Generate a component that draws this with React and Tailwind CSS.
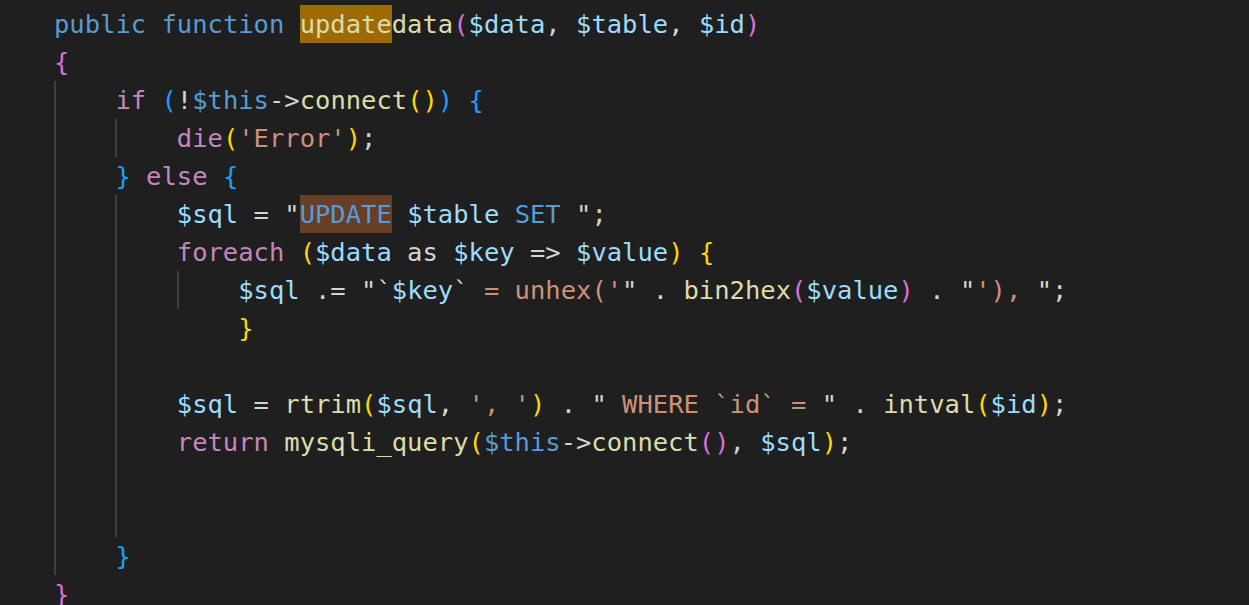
import React from 'react';

const colors = {
  kw: 'text-[#569cd6]',
  fn: 'text-[#dcdcaa]',
  v: 'text-[#9cdcfe]',
  ctl: 'text-[#c586c0]',
  s: 'text-[#ce9178]',
  p: 'text-[#d4d4d4]',
  b1: 'text-[#da70d6]',
  b2: 'text-[#ffd700]',
  b3: 'text-[#179fff]',
};

const highlights = {
  find: 'bg-[#9e6a03]',
  word: 'bg-[#673f27]',
};

// g = indent guides per indent level (1 = drawn), t = [text, colour, highlight]
const lines = [
  { g: [], t: [['public function ', 'kw'], ['update', 'fn', 'find'], ['data', 'fn'], ['(', 'b1'], ['$data', 'v'], [', ', 'p'], ['$table', 'v'], [', ', 'p'], ['$id', 'v'], [')', 'b1']] },
  { g: [], t: [['{', 'b1']] },
  { g: [1], t: [['if ', 'ctl'], ['(', 'b3'], ['!', 'p'], ['$this', 'kw'], ['->', 'p'], ['connect', 'fn'], ['()', 'b2'], [')', 'b3'], [' ', 'p'], ['{', 'b3']] },
  { g: [1, 1], t: [['die', 'ctl'], ['(', 'b2'], ["'Error'", 's'], [')', 'b2'], [';', 'p']] },
  { g: [1], t: [['}', 'b3'], [' else ', 'ctl'], ['{', 'b3']] },
  { g: [1, 1], t: [['$sql', 'v'], [' = ', 'p'], ['"', 'p'], ['UPDATE', 'kw', 'word'], [' ', 's'], ['$table', 'v'], [' ', 's'], ['SET', 'kw'], [' ', 's'], ['"', 'p'], [';', 'p']] },
  { g: [1, 1], t: [['foreach ', 'ctl'], ['(', 'b2'], ['$data', 'v'], [' as ', 'p'], ['$key', 'v'], [' => ', 'p'], ['$value', 'v'], [')', 'b2'], [' ', 'p'], ['{', 'b2']] },
  { g: [1, 1, 1], t: [['$sql', 'v'], [' .= ', 'p'], ['"`', 'p'], ['$key', 'v'], ['`', 'p'], [" = unhex('", 's'], ['"', 'p'], [' . ', 'p'], ['bin2hex', 'fn'], ['(', 'b1'], ['$value', 'v'], [')', 'b1'], [' . ', 'p'], ['"', 'p'], ["'), ", 's'], ['"', 'p'], [';', 'p']] },
  { g: [1, 1, 0], t: [['}', 'b2']] },
  { g: [1, 1], t: [] },
  { g: [1, 1], t: [['$sql', 'v'], [' = ', 'p'], ['rtrim', 'fn'], ['(', 'b2'], ['$sql', 'v'], [', ', 'p'], ["', '", 's'], [')', 'b2'], [' . ', 'p'], ['"', 'p'], [' WHERE `id` = ', 's'], ['"', 'p'], [' . ', 'p'], ['intval', 'fn'], ['(', 'b2'], ['$id', 'v'], [')', 'b2'], [';', 'p']] },
  { g: [1, 1], t: [['return ', 'ctl'], ['mysqli_query', 'fn'], ['(', 'b2'], ['$this', 'kw'], ['->', 'p'], ['connect', 'fn'], ['()', 'b1'], [', ', 'p'], ['$sql', 'v'], [')', 'b2'], [';', 'p']] },
  { g: [1, 1], t: [] },
  { g: [1, 1], t: [] },
  { g: [1], t: [['}', 'b3']] },
  { g: [], t: [['}', 'b1']] },
];

const CodeLine = ({ line }) => (
  <div className="flex h-[38px] items-stretch">
    {line.g.map((on, i) => (
      <span
        key={i}
        className={on ? 'w-[4ch] shrink-0 border-l-2 border-[#404040]' : 'w-[4ch] shrink-0'}
      />
    ))}
    {line.t.map(([text, c, hl], i) => (
      <span key={i} className={`block whitespace-pre leading-[38px] ${colors[c]} ${hl ? highlights[hl] : ''}`}>
        {text}
      </span>
    ))}
  </div>
);

export default function App() {
  return (
    <div className="h-[605px] w-full overflow-hidden bg-[#1f1f1f] pl-[54px] pt-[5px] font-['DejaVu_Sans_Mono','Liberation_Mono',monospace] text-[25.5px]">
      {lines.map((line, i) => (
        <CodeLine key={i} line={line} />
      ))}
    </div>
  );
}
